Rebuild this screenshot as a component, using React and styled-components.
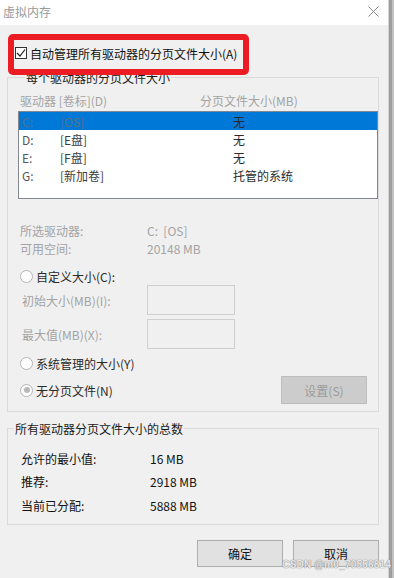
import React from "react";
import styled, { createGlobalStyle } from "styled-components";

const Global = createGlobalStyle`
  html, body { margin: 0; padding: 0; background: #f0f0f0; }
  body { font-family: "Noto Sans CJK SC", "Noto Sans", sans-serif; font-size: 12px; }
  * { box-sizing: border-box; }
`;

const Screen = styled.div`
  width: 394px;
  height: 578px;
  display: flex;
  overflow: hidden;
  position: relative;
`;

const Dialog = styled.div`
  flex: 1;
  display: flex;
  flex-direction: column;
  background: #f0f0f0;
`;

const EdgeStrip = styled.div`
  width: 6px;
  border-left: 1px solid #d2d2d2;
  background: linear-gradient(90deg, #9e9e9e 0 3px, #c2c2c2 3px);
`;

const TitleBar = styled.div`
  height: 25px;
  background: #ffffff;
  display: flex;
  align-items: center;
  justify-content: space-between;
  padding: 0 9px 2px 3px;
  color: #9a9a9a;
  font-size: 12px;
  line-height: 17px;
`;

const Body = styled.div`
  flex: 1;
  display: flex;
  flex-direction: column;
  padding: 19px 9px 0 7px;
  color: #1a1a1a;
`;

const CheckRow = styled.label`
  display: flex;
  align-items: center;
  gap: 3px;
  height: 18px;
  padding-left: 8px;
  line-height: 17px;
  color: #111;
`;

const CheckBox = styled.span`
  width: 12px;
  height: 12px;
  border: 1px solid #333;
  background: #fff;
  display: flex;
  align-items: center;
  justify-content: center;
`;

const Highlight = styled.div`
  position: absolute;
  left: 8px;
  top: 34px;
  width: 241px;
  height: 41px;
  border: 6px solid #ec1c24;
  border-radius: 5px;
  pointer-events: none;
`;

const Group = styled.fieldset`
  margin: ${(p) => p.$mt}px 0 0 0;
  padding: 0 ${(p) => p.$pr || 0}px ${(p) => p.$pb}px ${(p) => p.$pl}px;
  border: 1px solid #dadada;
  min-width: 0;
  display: flex;
  flex-direction: column;
`;

const Legend = styled.legend`
  margin-left: ${(p) => p.$ml}px;
  padding: 0 1px;
  line-height: 17px;
  color: #1a1a1a;
`;

const HeaderRow = styled.div`
  display: grid;
  grid-template-columns: 180px 1fr;
  padding-left: 2px;
  margin-top: 6px;
  line-height: 17px;
  color: #a3a3a3;
`;

const ListBox = styled.div`
  margin-top: 2px;
  margin-right: -${(p) => p.$bleed}px;
  height: 88px;
  border: 1px solid #828790;
  background: #ffffff;
  display: flex;
  flex-direction: column;
`;

const ListRow = styled.div`
  display: grid;
  grid-template-columns: 38px 173px 1fr;
  height: 18px;
  align-items: center;
  padding-left: 3px;
  line-height: 17px;
  background: ${(p) => (p.$selected ? "#0078d7" : "transparent")};
  color: #3a3a3a;
`;

const Cell = styled.span`
  color: ${(p) => (p.$selected ? "#5e6f80" : p.$tone || "#4a4a4a")};
`;

const InfoGrid = styled.div`
  display: grid;
  grid-template-columns: 127px 1fr;
  padding-left: 2px;
  margin-top: 23px;
  line-height: 18px;
  color: #a3a3a3;
`;

const RadioRow = styled.div`
  display: flex;
  align-items: center;
  justify-content: space-between;
  margin-top: ${(p) => p.$mt}px;
  height: ${(p) => p.$h || 18}px;
`;

const RadioLabel = styled.label`
  display: flex;
  align-items: center;
  gap: 3px;
  padding-left: 2px;
  line-height: 17px;
  color: #2a2a2a;
`;

const RadioCircle = styled.span`
  width: 13px;
  height: 13px;
  border-radius: 50%;
  border: 1px solid #b4b4b4;
  background: #fff;
  display: flex;
  align-items: center;
  justify-content: center;
  &::after {
    content: "";
    width: 6px;
    height: 6px;
    border-radius: 50%;
    background: ${(p) => (p.$checked ? "#b8b8b8" : "transparent")};
  }
`;

const InputRow = styled.div`
  display: grid;
  grid-template-columns: 125px 88px;
  align-items: center;
  padding-left: 4px;
  margin-top: ${(p) => p.$mt}px;
  color: #a3a3a3;
  line-height: 17px;
`;

const TextBox = styled.div`
  height: ${(p) => p.$h}px;
  border: 1px solid #cfcfcf;
  background: #f0f0f0;
`;

const SetButton = styled.button`
  width: 86px;
  height: 28px;
  border: 1px solid #bdbdbd;
  background: #cccccc;
  color: #9b9b9b;
  font-family: inherit;
  font-size: 12px;
  padding: 0;
`;

const TotalRow = styled.div`
  display: grid;
  grid-template-columns: 129px 1fr;
  height: ${(p) => p.$h || 23}px;
  align-items: center;
  padding-left: 13px;
  line-height: 17px;
  color: #111;
`;

const Spacer = styled.div`
  height: ${(p) => p.$h}px;
`;

const ButtonBar = styled.div`
  display: flex;
  justify-content: flex-end;
  gap: 10px;
  margin-top: 15px;
`;

const DialogButton = styled.button`
  width: 86px;
  height: 27px;
  border: 1px solid #adadad;
  background: #e1e1e1;
  color: #111;
  font-family: inherit;
  font-size: 12px;
  padding: 0;
`;

const Watermark = styled.div`
  position: absolute;
  right: 3px;
  bottom: 8px;
  font-family: "Liberation Sans", Arial, sans-serif;
  font-size: 10px;
  font-weight: bold;
  color: #e6e6e6;
  text-shadow: 0 0 1px #8a8a8a, 0 0 1px #8a8a8a;
  letter-spacing: 0.2px;
`;

const drives = [
  { d: "C:", l: "[OS]", s: "无", sel: true },
  { d: "D:", l: "[E盘]", s: "无" },
  { d: "E:", l: "[F盘]", s: "无" },
  { d: "G:", l: "[新加卷]", s: "托管的系统" },
];

export default function App() {
  return (
    <Screen>
      <Global />
      <Dialog>
        <TitleBar>
          <span>虚拟内存</span>
          <svg width="11" height="11" viewBox="0 0 11 11">
            <path d="M0.5 0.5 L10.5 10.5 M10.5 0.5 L0.5 10.5" stroke="#8a8a8a" strokeWidth="1" />
          </svg>
        </TitleBar>
        <Body>
          <CheckRow>
            <CheckBox>
              <svg width="10" height="10" viewBox="0 0 10 10">
                <path d="M1 5 L4 8 L9 1.5" fill="none" stroke="#222" strokeWidth="1.2" />
              </svg>
            </CheckBox>
            <span>自动管理所有驱动器的分页文件大小(A)</span>
          </CheckRow>

          <Group $mt={7} $pl={10} $pr={11} $pb={3}>
            <Legend $ml={7}>每个驱动器的分页文件大小</Legend>
            <HeaderRow>
              <span>驱动器 [卷标](D)</span>
              <span>分页文件大小(MB)</span>
            </HeaderRow>
            <ListBox $bleed={11}>
              {drives.map((r) => (
                <ListRow key={r.d} $selected={r.sel}>
                  <Cell $selected={r.sel} $tone="#555">{r.d}</Cell>
                  <Cell $selected={r.sel} $tone="#3c3c3c">{r.l}</Cell>
                  <Cell $tone="#2a2a2a">{r.s}</Cell>
                </ListRow>
              ))}
            </ListBox>
            <InfoGrid>
              <span>所选驱动器:</span>
              <span>C:&nbsp; [OS]</span>
              <span>可用空间:</span>
              <span>20148 MB</span>
            </InfoGrid>
            <RadioRow $mt={9}>
              <RadioLabel>
                <RadioCircle />
                <span>自定义大小(C):</span>
              </RadioLabel>
            </RadioRow>
            <InputRow $mt={0}>
              <span>初始大小(MB)(I):</span>
              <TextBox $h={30} />
            </InputRow>
            <InputRow $mt={4}>
              <span>最大值(MB)(X):</span>
              <TextBox $h={30} />
            </InputRow>
            <RadioRow $mt={5}>
              <RadioLabel>
                <RadioCircle />
                <span>系统管理的大小(Y)</span>
              </RadioLabel>
            </RadioRow>
            <RadioRow $mt={0} $h={36}>
              <RadioLabel>
                <RadioCircle $checked />
                <span>无分页文件(N)</span>
              </RadioLabel>
              <SetButton>设置(S)</SetButton>
            </RadioRow>
          </Group>

          <Group $mt={8} $pl={0} $pb={7}>
            <Legend $ml={6}>所有驱动器分页文件大小的总数</Legend>
            <Spacer $h={10} />
            <TotalRow $h={22}>
              <span>允许的最小值:</span>
              <span>16 MB</span>
            </TotalRow>
            <TotalRow $h={24}>
              <span>推荐:</span>
              <span>2918 MB</span>
            </TotalRow>
            <TotalRow $h={24}>
              <span>当前已分配:</span>
              <span>5888 MB</span>
            </TotalRow>
          </Group>

          <ButtonBar>
            <DialogButton>确定</DialogButton>
            <DialogButton>取消</DialogButton>
          </ButtonBar>
        </Body>
      </Dialog>
      <EdgeStrip />
      <Highlight />
      <Watermark>CSDN @m0_70556814</Watermark>
    </Screen>
  );
}
